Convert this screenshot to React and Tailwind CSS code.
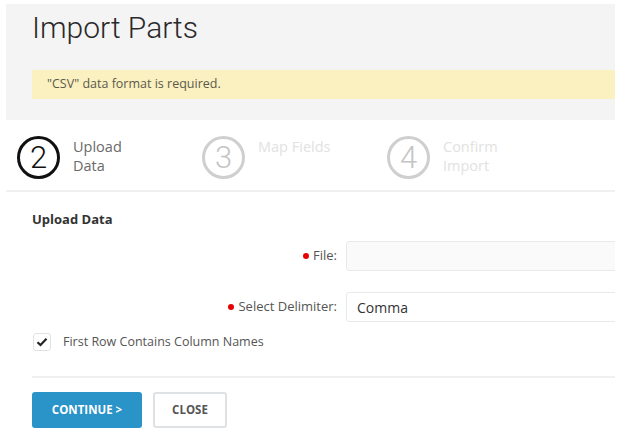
import React from "react";

function Step({ n, lines, active }) {
  return (
    <div className="flex w-[185px] shrink-0 items-start">
      <div
        className={
          "flex h-[43px] w-[43px] shrink-0 items-center justify-center rounded-full border-[3px] font-['Roboto'] text-[31px] font-light leading-none " +
          (active ? "border-[#111] text-[#111]" : "border-[#cfcfcf] text-[#c4c4c4]")
        }
      >
        {n}
      </div>
      <div
        className={
          "ml-[13px] pt-[1px] text-[14.5px] leading-[19px] " +
          (active ? "text-[#6a6a6a]" : "text-[#e2e2e2]")
        }
      >
        {lines.map((l, i) => (
          <div key={i}>{l}</div>
        ))}
      </div>
    </div>
  );
}

export default function App() {
  return (
    <div className="h-[443px] w-[621px] overflow-hidden bg-white font-['Open_Sans',sans-serif]">
      <div className="ml-[6px] w-[609px] overflow-hidden pt-[4px]">
        <div className="h-[116px] bg-[#f4f4f4] pl-[26px] pt-[6px]">
          <h1 className="font-['Roboto',sans-serif] text-[30px] font-light leading-[36px] text-[#2a2a2a]">
            Import Parts
          </h1>
          <div className="mt-[24px] flex h-[29px] items-center bg-[#faf0c0] pl-[15px] text-[12.5px] text-[#5c5a4c]">
            "CSV" data format is required.
          </div>
        </div>
        <div className="flex h-[72px] items-start border-b-2 border-[#f0f0f0] pl-[11px] pt-[16px]">
          <Step n="2" lines={["Upload", "Data"]} active />
          <Step n="3" lines={["Map Fields"]} />
          <Step n="4" lines={["Confirm", "Import"]} />
        </div>
        <div className="pl-[26px]">
          <div className="mt-[18px] text-[13px] font-bold leading-[18px] text-[#333]">
            Upload Data
          </div>
          <div className="mt-[13px] flex items-center">
            <div className="flex w-[305px] shrink-0 items-center justify-end text-[13px] text-[#555]">
              <span className="mr-[4px] h-[6px] w-[6px] rounded-full bg-[#e60000]" />
              File:
            </div>
            <div className="ml-[9px] h-[30px] w-[300px] shrink-0 rounded-[3px] border border-[#e9e9e9] bg-[#fafafa]" />
          </div>
          <div className="mt-[21px] flex items-center">
            <div className="flex w-[305px] shrink-0 items-center justify-end text-[13px] text-[#555]">
              <span className="mr-[4px] h-[6px] w-[6px] rounded-full bg-[#e60000]" />
              Select Delimiter:
            </div>
            <div className="ml-[9px] flex h-[30px] w-[300px] shrink-0 items-center rounded-[3px] border border-[#e9e9e9] bg-white pl-[10px] text-[14px] text-[#333]">
              Comma
            </div>
          </div>
          <div className="mt-[11px] flex items-center">
            <div className="ml-[1px] flex h-[18px] w-[18px] items-center justify-center rounded-[3px] border border-[#e2e2e2] bg-white">
              <svg width="12" height="10" viewBox="0 0 12 10">
                <path d="M1.5 5.2 L4.5 8 L10.5 1.8" fill="none" stroke="#222" strokeWidth="2.2" />
              </svg>
            </div>
            <span className="ml-[12px] text-[12.5px] text-[#555]">First Row Contains Column Names</span>
          </div>
          <div className="mt-[24px] border-t-2 border-[#f0f0f0]" />
          <div className="mt-[14px] flex gap-[11px]">
            <button className="h-[36px] w-[110px] rounded-[3px] bg-[#2a93c8] text-[11.5px] font-bold text-white">
              CONTINUE &gt;
            </button>
            <button className="h-[36px] w-[74px] rounded-[3px] border-2 border-[#dfe2e5] bg-white text-[11.5px] font-bold text-[#555]">
              CLOSE
            </button>
          </div>
        </div>
      </div>
    </div>
  );
}
